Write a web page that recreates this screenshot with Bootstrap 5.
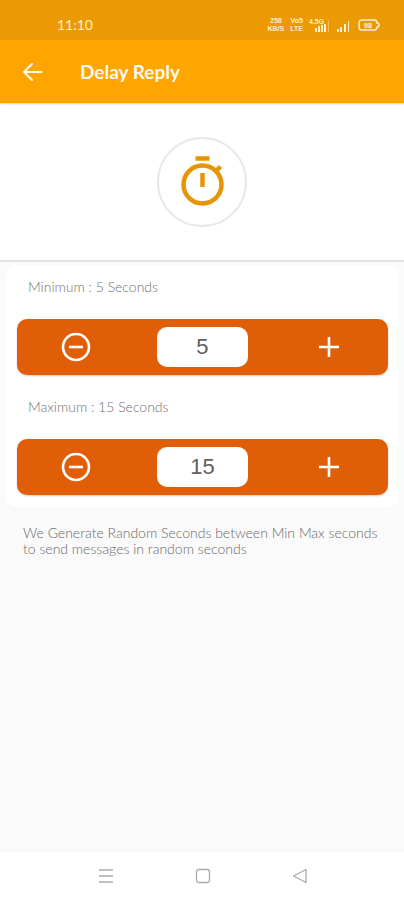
<!DOCTYPE html>
<html lang="en">
<head>
<meta charset="utf-8">
<meta name="viewport" content="width=device-width, initial-scale=1">
<title>Delay Reply</title>
<link rel="stylesheet" href="https://cdn.jsdelivr.net/npm/bootstrap@5.3.0/dist/css/bootstrap.min.css">
<style>
body { background: #fafafa; font-family: Lato, "Open Sans", sans-serif; color: #858585; }
button { padding: 0; border: 0; background: none; color: inherit; }
svg { display: block; }
.status-strip { height: 40px; padding: 10px 24px 0 57px; background: #ec9a03; color: #fff0cf; }
.clock { font-size: 14px; line-height: 30px; }
.tiny { font: 700 7px/8px "Liberation Sans", sans-serif; text-align: center; }
.status-icons { gap: 6px; height: 30px; }
.app-bar { height: 63px; padding: 0 22px; gap: 37px; background: #ffa500; color: #fffaf0; box-shadow: 0 1px 2px #0003; position: relative; }
.app-bar h1 { font-size: 19px; line-height: 24px; font-weight: 700; }
.hero { height: 159px; padding-top: 34px; border-bottom: 2px solid #e0e0e0; }
.ring { width: 90px; height: 90px; border: 2px solid #e8e8e8; }
.panel { margin: 3px 5px 0 6px; padding: 14px 11px 12px; border-radius: 10px; gap: 24px; }
.panel label { padding-left: 11px; font-size: 14px; line-height: 16px; font-weight: 300; color: #707070; }
.stepper { height: 56px; border-radius: 10px; background: #e05e08; color: #fff; box-shadow: 0 1px 2px #0003; }
.stepper button { width: 32%; height: 56px; }
.stepper .field { width: 36%; }
.stepper input { width: 68%; height: 40px; border: 0; border-radius: 10px; background: #fff; color: #606060; font-family: "Liberation Sans", sans-serif; font-size: 22px; line-height: 40px; text-align: center; padding: 0; }
.note { margin: 18px 22px 0 23px; font-size: 14px; line-height: 16px; font-weight: 300; color: #686868; }
.sys-nav { height: 48px; padding: 0 56px 0 58px; color: #aaa; }
</style>
</head>
<body>
<div class="d-flex flex-column min-vh-100">
  <div class="status-strip d-flex justify-content-between">
    <span class="clock">11:10</span>
    <div class="status-icons d-flex align-items-center">
      <div class="tiny"><div>258</div><div>KB/S</div></div>
      <div class="tiny"><div>Vo5</div><div>LTE</div></div>
      <svg width="21" height="14" viewBox="0 0 21 14" fill="currentColor" aria-hidden="true"><text x="0" y="6" font-family="Liberation Sans" font-size="7" font-weight="700">4.5G</text><path d="M6 10h2v4H6zM9 8h2v6H9zM12 7h2v7h-2zM15 6h2v8h-2z"/><path d="M19 2h1v12h-1z" opacity=".4"/></svg>
      <svg width="16" height="14" viewBox="0 0 16 14" fill="currentColor" aria-hidden="true"><path d="M1 11h2v3H1zM4 9h2v5H4zM8 6h2v8H8z"/><path d="M12 3h1v11h-1z"/></svg>
      <svg width="22" height="12" viewBox="0 0 22 12" aria-label="Battery 98"><path d="M4 1h12q3 0 3 3h1q1 0 1 2t-1 2h-1q0 3-3 3H4q-3 0-3-3V4q0-3 3-3z" fill="none" stroke="currentColor" stroke-width="1.5"/><text x="10" y="9" text-anchor="middle" font-family="Liberation Sans" font-size="7" font-weight="700" fill="currentColor">98</text></svg>
    </div>
  </div>
  <header class="app-bar d-flex align-items-center">
    <button type="button" aria-label="Back"><svg width="21" height="20" viewBox="0 0 21 20" fill="none" stroke="currentColor" stroke-width="2" stroke-linecap="round" stroke-linejoin="round"><path d="M19.500 10H2M10 2l-8 8 8 8"/></svg></button>
    <h1 class="m-0">Delay Reply</h1>
  </header>
  <section class="hero bg-white d-flex justify-content-center">
    <div class="ring rounded-circle d-flex justify-content-center align-items-center">
      <svg width="44" height="52" viewBox="0 0 44 52" fill="none" stroke="#e69508" stroke-width="4.500" aria-hidden="true"><circle cx="22.500" cy="28.500" r="19"/><path d="M15.500 2.500h14M22.500 17v14M35.500 15.500l5-5"/></svg>
    </div>
  </section>
  <main class="flex-grow-1">
    <form class="panel bg-white d-flex flex-column">
      <label for="min">Minimum : 5 Seconds</label>
      <div class="stepper d-flex align-items-center">
        <button type="button" class="d-flex justify-content-center align-items-center" aria-label="Decrease minimum"><svg width="30" height="30" viewBox="0 0 30 30" fill="none" stroke="currentColor" stroke-width="2.600"><circle cx="15" cy="15" r="13"/><path d="M8 15h14"/></svg></button>
        <div class="field d-flex justify-content-center"><input id="min" type="text" inputmode="numeric" value="5"></div>
        <button type="button" class="d-flex justify-content-center align-items-center" aria-label="Increase minimum"><svg width="22" height="22" viewBox="0 0 22 22" fill="none" stroke="currentColor" stroke-width="2.600"><path d="M1 11h20M11 1v20"/></svg></button>
      </div>
      <label for="max">Maximum : 15 Seconds</label>
      <div class="stepper d-flex align-items-center">
        <button type="button" class="d-flex justify-content-center align-items-center" aria-label="Decrease maximum"><svg width="30" height="30" viewBox="0 0 30 30" fill="none" stroke="currentColor" stroke-width="2.600"><circle cx="15" cy="15" r="13"/><path d="M8 15h14"/></svg></button>
        <div class="field d-flex justify-content-center"><input id="max" type="text" inputmode="numeric" value="15"></div>
        <button type="button" class="d-flex justify-content-center align-items-center" aria-label="Increase maximum"><svg width="22" height="22" viewBox="0 0 22 22" fill="none" stroke="currentColor" stroke-width="2.600"><path d="M1 11h20M11 1v20"/></svg></button>
      </div>
    </form>
    <p class="note">We Generate Random Seconds between Min Max seconds to send messages in random seconds</p>
  </main>
  <nav class="sys-nav bg-white d-flex align-items-center" aria-label="System">
    <button type="button" class="flex-fill d-flex justify-content-center" aria-label="Recent apps"><svg width="16" height="16" viewBox="0 0 16 16" stroke="currentColor" stroke-width="1.300"><path d="M1 2h14M1 8h14M1 14h14"/></svg></button>
    <button type="button" class="flex-fill d-flex justify-content-center" aria-label="Home"><svg width="16" height="16" viewBox="0 0 16 16" fill="none" stroke="currentColor" stroke-width="1.300"><rect x="1.500" y="1.500" width="13" height="13" rx="2.500"/></svg></button>
    <button type="button" class="flex-fill d-flex justify-content-center" aria-label="Back one screen"><svg width="16" height="16" viewBox="0 0 16 16" fill="none" stroke="currentColor" stroke-width="1.300" stroke-linejoin="round"><path d="M14 1.500v13L1.500 8z"/></svg></button>
  </nav>
</div>
<script src="https://cdn.jsdelivr.net/npm/bootstrap@5.3.0/dist/js/bootstrap.bundle.min.js"></script>
</body>
</html>
